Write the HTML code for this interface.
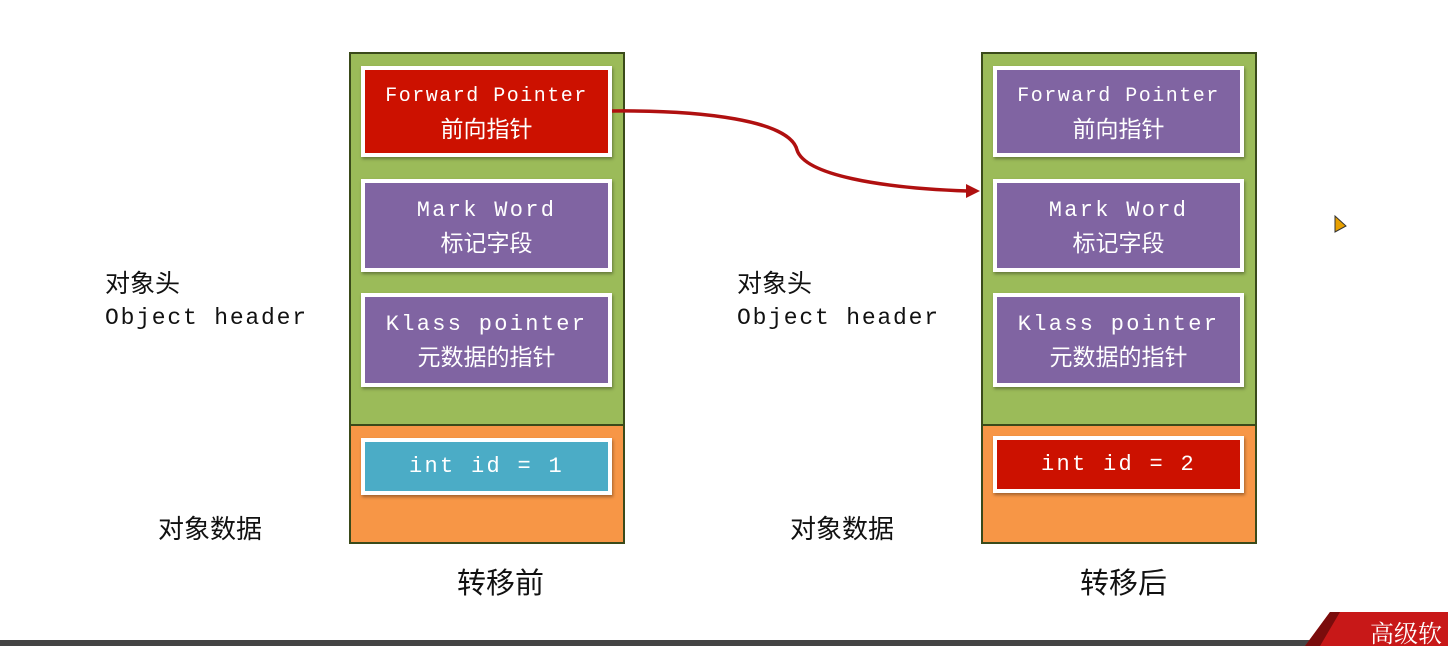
<!DOCTYPE html><html><head><meta charset="utf-8"><style>
body{margin:0;width:1448px;height:646px;background:#fff;position:relative;overflow:hidden;font-family:"Liberation Mono","Noto Sans CJK SC",monospace}
.col{position:absolute;top:52px;width:272px;height:488px;border:2px solid #3a4a1a;background:#9bbb59}
.org{position:absolute;left:0;right:0;top:370px;bottom:0;background:#f79646;border-top:2px solid #3a4a1a}
.b{position:absolute;left:10px;width:243px;border:4px solid #fff;color:#fff;text-align:center;font-size:22px;line-height:30px;box-shadow:1px 2px 3px rgba(0,0,0,.35);display:flex;flex-direction:column;justify-content:center;letter-spacing:2.3px;white-space:nowrap}
.b span{font-family:"Noto Sans CJK SC",sans-serif;letter-spacing:0;font-size:23px}
.p{background:#8064a2}.r{background:#cc1100}.bl{background:#4bacc6}
.t{position:absolute;font-size:23px;color:#111;line-height:32px;letter-spacing:1.8px}
.c{font-family:"Noto Sans CJK SC",sans-serif;letter-spacing:0;font-size:25px}
</style></head><body>
<div class="col" style="left:349px">
<div class="b r" style="top:12px;height:83px;font-size:20px;letter-spacing:1.5px">Forward Pointer<span>前向指针</span></div>
<div class="b p" style="top:125px;height:85px">Mark Word<span>标记字段</span></div>
<div class="b p" style="top:239px;height:86px">Klass pointer<span>元数据的指针</span></div>
<div class="org"><div class="b bl" style="top:12px;height:49px">int id = 1</div></div>
</div>
<div class="col" style="left:981px">
<div class="b p" style="top:12px;height:83px;font-size:20px;letter-spacing:1.5px">Forward Pointer<span>前向指针</span></div>
<div class="b p" style="top:125px;height:85px">Mark Word<span>标记字段</span></div>
<div class="b p" style="top:239px;height:86px">Klass pointer<span>元数据的指针</span></div>
<div class="org"><div class="b r" style="top:10px;height:49px">int id = 2</div></div>
</div>
<div class="t" style="left:105px;top:266px"><span class="c">对象头</span><br>Object header</div>
<div class="t" style="left:737px;top:266px"><span class="c">对象头</span><br>Object header</div>
<div class="t c" style="left:158px;top:512px;font-size:26px">对象数据</div>
<div class="t c" style="left:790px;top:512px;font-size:26px">对象数据</div>
<div class="t c" style="left:457px;top:565px;font-size:29px">转移前</div>
<div class="t c" style="left:1080px;top:565px;font-size:29px">转移后</div>
<svg style="position:absolute;left:0;top:0" width="1448" height="646">
<path d="M612 111 C700 110 790 120 797 150 C805 175 880 188 968 191" stroke="#b01010" stroke-width="3.5" fill="none"/>
<polygon points="980,191 966,184 966,198" fill="#b01010"/>
<polygon points="1335,216 1335,232 1346,226" fill="#e8a000" stroke="#333" stroke-width="1"/>
<rect x="0" y="640" width="1448" height="6" fill="#444"/>
<polygon points="1305,646 1330,612 1448,612 1448,646" fill="#c81818"/>
<polygon points="1305,646 1330,612 1340,612 1320,646" fill="#7a0c0c"/>
<text x="1370" y="642" fill="#fff" font-size="24" font-family="Noto Serif CJK SC,serif">高级软</text>
</svg>
</body></html>
